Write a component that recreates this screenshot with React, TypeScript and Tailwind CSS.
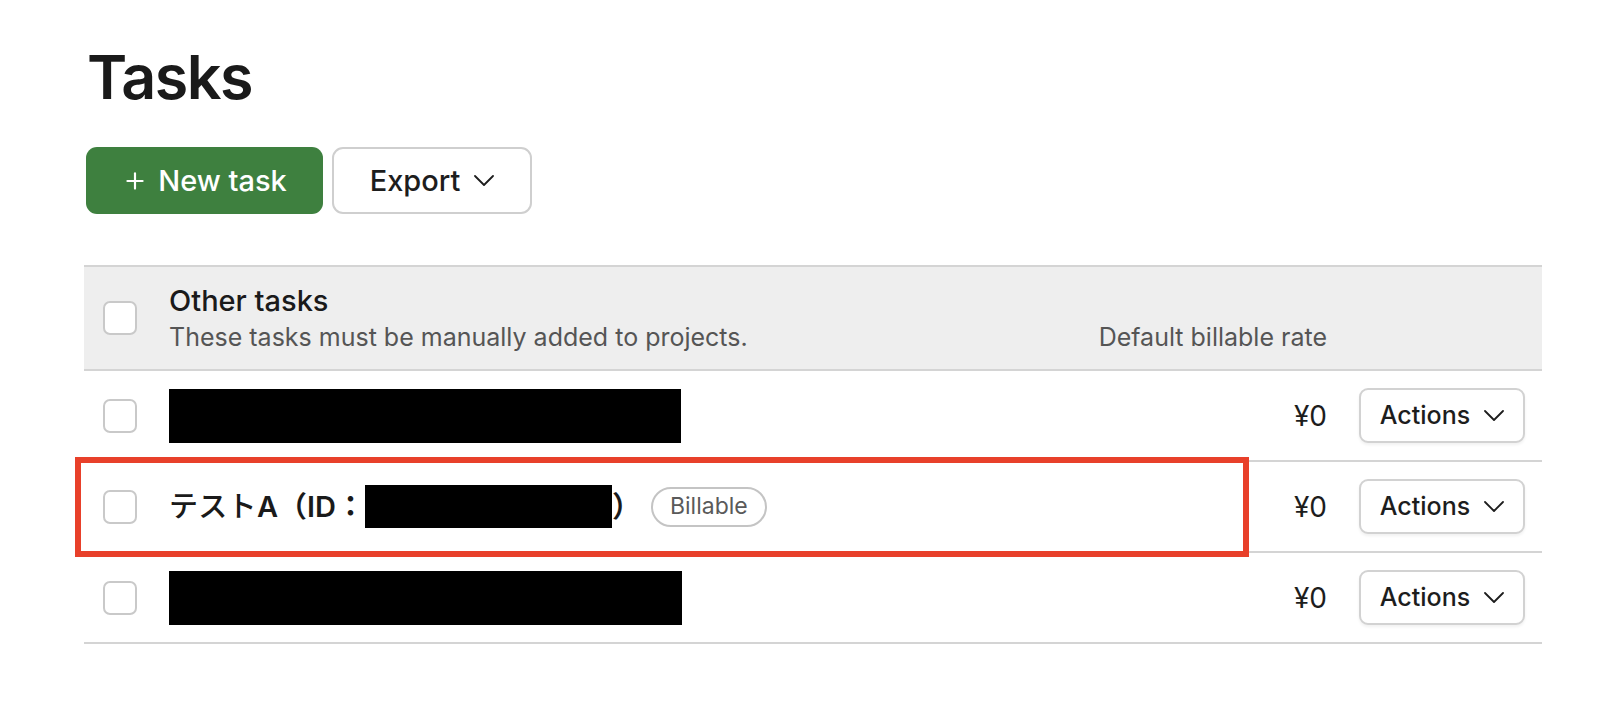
import { Plus } from "lucide-react";

const font = { fontFamily: "Inter, 'Noto Sans CJK JP', sans-serif" };

function Chevron() {
  return (
    <svg width="20" height="11" viewBox="0 0 20 11" fill="none" className="shrink-0">
      <path d="M1 1l9 9 9-9" stroke="currentColor" strokeWidth="1.8" strokeLinecap="round" strokeLinejoin="round" />
    </svg>
  );
}

function Checkbox() {
  return (
    <div className="h-[34px] w-[34px] shrink-0 rounded-[7px] border-2 border-[#c9c9c9] bg-white" />
  );
}

function ActionsButton() {
  return (
    <button className="flex h-[55px] w-[166px] items-center justify-center gap-[14px] rounded-[9px] border-2 border-[#d2d2d2] bg-white text-[25px] font-medium text-[#1d1d1d] shadow-[0_2px_3px_rgba(0,0,0,0.06)]">
      Actions
      <Chevron />
    </button>
  );
}

function TaskRow({
  children,
  highlight = false,
}: {
  children: React.ReactNode;
  highlight?: boolean;
}) {
  return (
    <div className="relative flex h-[91px] items-center border-b-2 border-[#d4d4d4] pl-[19px] pr-[17px]">
      <Checkbox />
      <div className="ml-[32px] flex flex-1 items-center">{children}</div>
      <span className="text-[28px] text-[#1d1d1d]">¥0</span>
      <div className="ml-[32px]">
        <ActionsButton />
      </div>
      {highlight && (
        <div className="pointer-events-none absolute left-[-9px] top-[-5px] h-[100px] w-[1174px] border-[6px] border-[#e8402a]" />
      )}
    </div>
  );
}

export default function App() {
  return (
    <div className="min-h-screen bg-white px-[84px] pt-[47px] text-[#1d1d1d]" style={font}>
      <h1 className="ml-[3px] text-[61px] font-semibold leading-none tracking-[-0.025em] text-[#1a1a1a]">
        Tasks
      </h1>

      <div className="ml-[2px] mt-[39px] flex gap-[9px]">
        <button className="flex h-[67px] w-[237px] items-center justify-center gap-[10px] rounded-[11px] bg-[#3e803f] text-[29px] font-medium text-white">
          <Plus className="h-[26px] w-[26px]" strokeWidth={2} />
          New task
        </button>
        <button className="flex h-[67px] w-[200px] items-center justify-center gap-[14px] rounded-[11px] border-2 border-[#cfcfcf] bg-white text-[29px] font-medium text-[#1d1d1d]">
          Export
          <Chevron />
        </button>
      </div>

      <div className="mt-[51px] w-[1458px]">
        <div className="flex h-[106px] items-center border-y-2 border-[#d4d4d4] bg-[#eeeeee] pl-[19px] pr-[17px]">
          <Checkbox />
          <div className="ml-[32px] flex-1">
            <div className="text-[29px] font-medium leading-[37px] text-[#1a1a1a]">Other tasks</div>
            <div className="text-[25px] leading-[36px] text-[#555555]">
              These tasks must be manually added to projects.
            </div>
          </div>
          <div className="mt-[37px] text-[25px] leading-[36px] text-[#555555]">Default billable rate</div>
          <div className="w-[198px]" />
        </div>

        <TaskRow>
          <div className="h-[54px] w-[512px] bg-black" />
        </TaskRow>

        <TaskRow highlight>
          <span className="text-[29px] font-medium tracking-[0.01em] text-[#1a1a1a]">テスト</span>
          <span className="text-[29px] font-semibold text-[#1a1a1a]">A（ID：</span>
          <span className="h-[43px] w-[247px] bg-black" />
          <span className="text-[29px] font-semibold text-[#1a1a1a]">）</span>
          <span className="ml-[10px] flex h-[40px] items-center rounded-full border-2 border-[#c4c4c4] px-[17px] text-[23px] text-[#5a5a5a]">
            Billable
          </span>
        </TaskRow>

        <TaskRow>
          <div className="h-[54px] w-[513px] bg-black" />
        </TaskRow>
      </div>
    </div>
  );
}
